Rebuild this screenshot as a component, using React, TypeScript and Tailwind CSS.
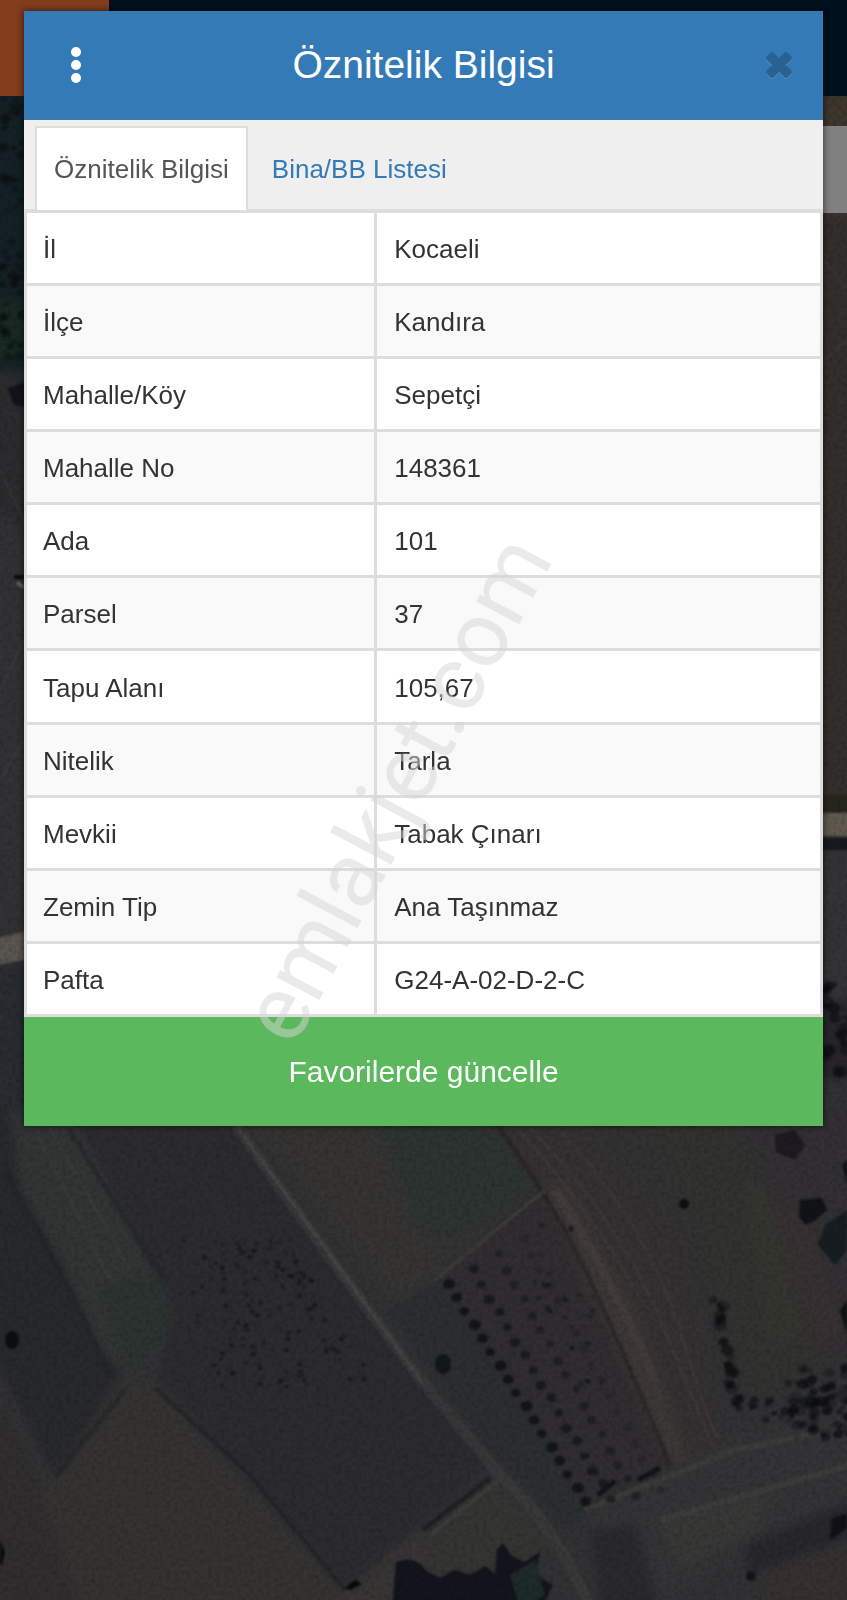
import { useState } from "react";

const rows: [string, string][] = [
  ["İl", "Kocaeli"],
  ["İlçe", "Kandıra"],
  ["Mahalle/Köy", "Sepetçi"],
  ["Mahalle No", "148361"],
  ["Ada", "101"],
  ["Parsel", "37"],
  ["Tapu Alanı", "105,67"],
  ["Nitelik", "Tarla"],
  ["Mevkii", "Tabak Çınarı"],
  ["Zemin Tip", "Ana Taşınmaz"],
  ["Pafta", "G24-A-02-D-2-C"],
];

const tabs = ["Öznitelik Bilgisi", "Bina/BB Listesi"];

type Dot = { x: number; y: number; r: number; o: number };

// Rows of orchard trees, planted along the edge of the field.
const orchard: Dot[] = [];
for (let i = 0; i < 17; i++) {
  for (let j = 0; j < 4; j++) {
    orchard.push({
      x: 449 + i * 8.6 + j * 25 - (i % 3),
      y: 1284 + i * 13.6 - j * (15 - i * 0.7) + ((i * j) % 3),
      r: 6 - j * 0.5 - ((i + j) % 3) * 0.6,
      o: 0.75 - j * 0.17,
    });
  }
}

function scatter(count: number, seed: number, x0: number, y0: number, w: number, h: number, skew: number, size: number): Dot[] {
  let s = seed;
  const next = () => {
    s = (s * 16807) % 2147483647;
    return s / 2147483647;
  };
  return Array.from({ length: count }, () => {
    const v = next();
    return { x: x0 + next() * w + v * skew, y: y0 + v * h, r: size * (0.5 + next()), o: 0.3 + next() * 0.4 };
  });
}

const shrubs: Dot[] = [
  ...scatter(110, 77, 170, 1240, 100, 150, 50, 1.8),
  ...scatter(60, 15, 262, 1240, 30, 140, 80, 1.8),
  ...scatter(70, 91, 785, 1368, 62, 70, 10, 4),
  ...scatter(26, 31, 712, 1300, 10, 110, 22, 5),
  ...scatter(16, 63, 740, 1400, 50, 20, 10, 3.5),
  ...scatter(30, 42, 510, 1225, 60, 160, 60, 2.2),
  ...scatter(50, 24, 0, 100, 24, 260, 0, 4),
  ...scatter(24, 57, 823, 985, 24, 90, 0, 5),
];

function Dots({ items }: { items: Dot[] }) {
  return (
    <g fill="#0b0d10">
      {items.map((d, i) => (
        <ellipse key={i} cx={d.x} cy={d.y} rx={d.r} ry={d.r * 0.85} opacity={d.o} />
      ))}
    </g>
  );
}

function SatelliteMap() {
  return (
    <svg className="absolute inset-0 h-full w-full" viewBox="0 0 847 1600" preserveAspectRatio="xMidYMid slice" aria-hidden="true">
      <defs>
        <filter id="soft" x="-5%" y="-5%" width="110%" height="110%" colorInterpolationFilters="sRGB">
          <feGaussianBlur stdDeviation="5" />
        </filter>
        <filter id="fine" x="-5%" y="-5%" width="110%" height="110%" colorInterpolationFilters="sRGB">
          <feGaussianBlur stdDeviation="1.3" />
        </filter>
        <filter id="grain" x="0" y="0" width="100%" height="100%" colorInterpolationFilters="sRGB">
          <feTurbulence type="fractalNoise" baseFrequency="0.24" numOctaves="3" seed="4" />
          <feColorMatrix values="0 0 0 0 0  0 0 0 0 0  0 0 0 0 0  1.6 0 0 0 -0.62" />
        </filter>
      </defs>
      <rect width="847" height="1600" fill="#323234" />
      <g filter="url(#soft)">
        <path d="M-10 90H50V370H-10Z" fill="#142125" />
        <path d="M-10 300H50V360H-10Z" fill="#182a22" />
        <path d="M-10 370H50V560L-10 500Z" fill="#2c2b2d" />
        <path d="M-10 500 50 600V930H-10Z" fill="#323235" />
        <path d="M-10 970 50 958V1130H-10Z" fill="#292c30" />
        <path d="M815 90H857V230H815Z" fill="#3d372e" />
        <path d="M815 215H857V800H815Z" fill="#332f2d" />
        <path d="M815 856H857V1000H815Z" fill="#343336" />
        <path d="M815 1000H857V1080H815Z" fill="#29262b" />

        <path d="M-10 1110 15 1110 75 1270 122 1370 55 1478-10 1350Z" fill="#28292c" />
        <path d="M10 1110H75L160 1270 175 1330 130 1378 100 1350 60 1260 20 1190Z" fill="#313534" />
        <path d="M100 1290 160 1270 180 1320 130 1375Z" fill="#2c3331" />
        <path d="M70 1110H225L330 1260 490 1465 345 1590 155 1385 175 1310Z" fill="#2c2b2f" />
        <path d="M122 1380 155 1380 345 1590 330 1610H30L10 1500 55 1475Z" fill="#343332" />
        <path d="M100 1450 190 1500 230 1610H100Z" fill="#363230" />
        <path d="M-10 1385 30 1460 80 1610H-10Z" fill="#302e2e" />
        <path d="M240 1110H370L545 1185 430 1280 400 1310Z" fill="#353433" />
        <path d="M370 1110H480L540 1190 450 1245 420 1235Z" fill="#2e3432" />
        <path d="M385 1310 440 1280 590 1510 565 1530 480 1440Z" fill="#2b2f30" />
        <path d="M440 1275 540 1190 560 1210 670 1465 585 1508Z" fill="#302e30" />
        <path d="M480 1110H570L680 1210 715 1420 720 1450 670 1470 590 1260Z" fill="#353132" />
        <path d="M545 1190 565 1180 640 1320 690 1465 668 1460Z" fill="#3c3836" />
        <path d="M560 1110H640L700 1190 690 1240 640 1190Z" fill="#323232" />
        <path d="M640 1110H740L830 1360 765 1400 725 1370 690 1210Z" fill="#323230" />
        <path d="M745 1180 775 1190 800 1330 770 1350Z" fill="#353530" />
        <path d="M740 1110H857V1360L820 1350Z" fill="#323032" />
        <path d="M775 1210 805 1210 845 1330 815 1350Z" fill="#373132" />
        <path d="M590 1510 735 1435 857 1400V1490L760 1540 660 1610H590Z" fill="#343335" />
        <path d="M590 1530 635 1525 660 1610H600Z" fill="#2a2a2e" />
        <path d="M655 1520 770 1490 760 1530 680 1570Z" fill="#383837" />
        <path d="M745 1545 857 1500V1535L750 1575Z" fill="#28272c" />
        <path d="M765 1572 857 1545V1610H765Z" fill="#36312f" />
        <path d="M420 1545 495 1480 550 1540 520 1570 430 1575Z" fill="#353532" />
        <path d="M345 1590 420 1530 435 1560 390 1610H330Z" fill="#383535" />
      </g>
      <g filter="url(#fine)">
        <path d="M8 388 30 380V408L14 405Z" fill="#14121c" />
        <path d="M-10 940 50 925V955L-10 966Z" fill="#5a5650" />
        <path d="M815 795H857V812H815Z" fill="#26271c" />
        <path d="M815 813H857V836H815Z" fill="#605a50" />
        <path d="M815 838H857V850H815Z" fill="#17191a" />
      </g>
      <g fill="none" strokeLinejoin="round" filter="url(#fine)">
        <path d="M236 1125Q330 1260 425 1385L500 1475Q560 1530 590 1610" stroke="#454242" strokeWidth="11" opacity=".45" />
        <path d="M238 1128Q330 1255 422 1382" stroke="#57534f" strokeWidth="3" opacity=".5" />
        <path d="M498 1126Q555 1205 590 1280T670 1465" stroke="#211f22" strokeWidth="4" opacity=".6" />
        <path d="M555 1190Q610 1275 655 1380" stroke="#504642" strokeWidth="8" opacity=".35" />
        <path d="M545 1190 435 1280" stroke="#494643" strokeWidth="4" opacity=".5" />
        <path d="M530 1128Q620 1220 665 1330T715 1450M560 1130Q650 1230 680 1330T720 1440M515 1126Q600 1220 640 1300" stroke="#4b4040" strokeWidth="2" opacity=".5" />
        <path d="M585 1510 735 1450 857 1425M660 1520 850 1465" stroke="#464442" strokeWidth="6" opacity=".5" />
        <path d="M423 1530 490 1478" stroke="#202125" strokeWidth="5" />
        <path d="M430 1535 497 1482" stroke="#45443e" strokeWidth="4" opacity=".6" />
        <path d="M155 1388 250 1475 345 1590" stroke="#1f1f23" strokeWidth="4" opacity=".6" />
        <path d="M5 1170 75 1300 110 1375" stroke="#202226" strokeWidth="5" opacity=".5" />
        <path d="M68 1128 145 1250 165 1280" stroke="#202225" strokeWidth="5" opacity=".5" />
        <path d="M55 1478 125 1390" stroke="#202026" strokeWidth="5" opacity=".5" />
        <path d="M35 1130 110 1280M50 1128 130 1270" stroke="#42443f" strokeWidth="3" opacity=".35" />
        <path d="M824 260 847 290M824 360 847 340M0 470 24 520M0 690 24 640M824 900 847 880M0 780 24 740" stroke="#4a4542" strokeWidth="3" opacity=".3" />
        <path d="M14 577H24" stroke="#0b0c10" strokeWidth="4" />
        <path d="M17 582 24 588" stroke="#87858a" strokeWidth="3" opacity=".6" />
      </g>
      <g filter="url(#fine)">
        <Dots items={orchard} />
        <Dots items={shrubs} />
        <path d="M396 1562Q408 1556 420 1564L428 1572 440 1578 455 1570 470 1575 485 1566 495 1574 497 1550 503 1543 512 1556 525 1562 540 1552 535 1575 553 1585 540 1610H392Z" fill="#13141d" />
        <path d="M510 1575 535 1560 545 1595 520 1610Z" fill="#1e2b29" />
        <path d="M345 1588 355 1580 362 1584 350 1590Z" fill="#08090b" />
        <path d="M775 1135 795 1130 805 1145 795 1160 776 1152Z" fill="#1d1b21" />
        <path d="M800 1200 822 1198 827 1210 816 1220 805 1225 799 1217Z" fill="#121317" />
        <path d="M825 1225 847 1210V1250L835 1265 818 1245Z" fill="#171d21" />
        <path d="M832 1518 847 1514V1528L830 1540Z" fill="#111017" />
        <path d="M842 1165 847 1160V1185ZM840 1310 847 1300V1335Z" fill="#0f1114" />
        <circle cx="684" cy="1204" r="5" fill="#0f1012" />
        <circle cx="751" cy="1576" r="5" fill="#17151a" />
        <ellipse cx="443" cy="1364" rx="8" ry="10" fill="#121719" />
        <ellipse cx="12" cy="1340" rx="7" ry="9" fill="#0c0e11" />
        <path d="M0 1540 5 1552 2 1565H0Z" fill="#0b0c10" />
        <path d="M598 1495 615 1481M638 1480 660 1468" stroke="#121416" strokeWidth="5" />
      </g>
      <rect width="847" height="1600" filter="url(#grain)" opacity=".22" />
    </svg>
  );
}

function Backdrop() {
  return (
    <div className="absolute inset-0 flex flex-col overflow-hidden bg-[#323234]" aria-hidden="true">
      <SatelliteMap />
      <div className="relative flex h-24">
        <div className="w-[109px] bg-[#823d1d]" />
        <div className="flex-1 bg-[#00101d]" />
      </div>
      <div className="relative mt-[30px] ml-auto h-[87px] w-1/2 bg-[#808080]" />
    </div>
  );
}

export default function App() {
  const [active, setActive] = useState(0);

  return (
    <main className="relative min-h-screen overflow-hidden px-6 pt-[11px] pb-12 font-['Liberation_Sans',Arial,sans-serif] text-[26px] leading-9 text-[#333]">
      <Backdrop />

      <section role="dialog" aria-labelledby="dialog-title" className="relative bg-white shadow-[0_0_6px_1px_rgba(0,0,0,0.5)]">
        <header className="flex h-[109px] items-center justify-between border-b border-[#4076a5] bg-[#337ab7] px-6">
          <button type="button" aria-label="Menü" className="flex h-12 w-14 items-center justify-center text-white">
            <svg width="12" height="38" viewBox="0 0 12 38" fill="currentColor">
              <circle cx="6" cy="6" r="5" />
              <circle cx="6" cy="19" r="5" />
              <circle cx="6" cy="32" r="5" />
            </svg>
          </button>
          <h1 id="dialog-title" className="text-[39px] leading-12 text-white">Öznitelik Bilgisi</h1>
          <button type="button" aria-label="Kapat" className="flex h-12 w-14 items-center justify-end pr-[6px]">
            <svg width="28" height="30" viewBox="0 0 28 30" strokeWidth="4" strokeLinejoin="round">
              <path d="M7 4 14 11 21 4 25 8 18 15 25 22 21 26 14 19 7 26 3 22 10 15 3 8Z" transform="translate(0 1)" fill="#5290c4" stroke="#5290c4" />
              <path d="M7 4 14 11 21 4 25 8 18 15 25 22 21 26 14 19 7 26 3 22 10 15 3 8Z" fill="#296292" stroke="#296292" />
            </svg>
          </button>
        </header>

        <div role="tablist" className="flex gap-[5px] border-b border-[#ddd] bg-[#efefef] pt-[6px] pl-[11px]">
          {tabs.map((label, i) => (
            <button
              key={label}
              type="button"
              role="tab"
              aria-selected={active === i}
              onClick={() => setActive(i)}
              className={
                active === i
                  ? "-mb-px h-[84px] border-2 border-b-0 border-[#ddd] bg-white px-[17px] text-[#555]"
                  : "-mb-px h-[84px] border-2 border-b-0 border-transparent px-[17px] text-[#337ab7]"
              }
            >
              {label}
            </button>
          ))}
        </div>

        <table className="h-[807px] w-full border-collapse">
          <tbody>
            {rows.map(([name, value]) => (
              <tr key={name} className="odd:bg-white even:bg-[#f9f9f9]">
                <th scope="row" className="w-[44%] border-3 border-[#ddd] px-4 pt-[2px] text-left font-normal">{name}</th>
                <td className="border-3 border-[#ddd] px-[17px] pt-[2px]">{value}</td>
              </tr>
            ))}
          </tbody>
        </table>

        <button type="button" className="block h-[109px] w-full bg-[#5cb85c] text-[30px] text-white">
          Favorilerde güncelle
        </button>

        <div className="pointer-events-none absolute inset-0 flex items-center justify-center overflow-hidden">
          <span className="mt-[440px] mr-[54px] -rotate-62 font-[Roboto,sans-serif] text-[92px] leading-none text-[#d6d6d6]/50">emlakjet.com</span>
        </div>
      </section>
    </main>
  );
}
